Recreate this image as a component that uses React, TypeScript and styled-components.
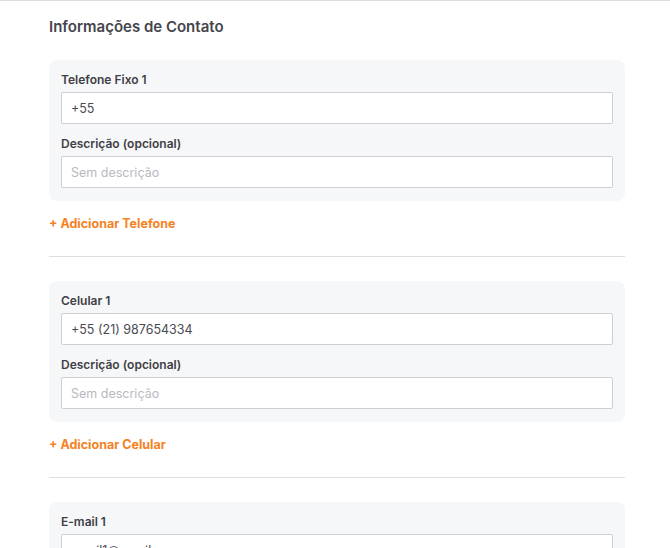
import React from 'react'
import styled, { createGlobalStyle } from 'styled-components'

const GlobalStyle = createGlobalStyle`
  body {
    margin: 0;
    background: #ffffff;
    font-family: Inter, "Noto Sans", "Liberation Sans", sans-serif;
  }
`

interface Field {
  readonly label: string
  readonly value?: string
  readonly placeholder?: string
}

interface Group {
  readonly fields: Field[]
  readonly addLabel: string
}

const groups: Group[] = [
  {
    fields: [
      { label: `Telefone Fixo 1`, value: `+55` },
      { label: `Descrição (opcional)`, placeholder: `Sem descrição` },
    ],
    addLabel: `+ Adicionar Telefone`,
  },
  {
    fields: [
      { label: `Celular 1`, value: `+55 (21) 987654334` },
      { label: `Descrição (opcional)`, placeholder: `Sem descrição` },
    ],
    addLabel: `+ Adicionar Celular`,
  },
  {
    fields: [
      { label: `E-mail 1`, value: `email1@gmail.com` },
      { label: `Descrição (opcional)`, placeholder: `Sem descrição` },
    ],
    addLabel: `+ Adicionar E-mail`,
  },
]

const App = () => {
  return (
    <>
      <GlobalStyle />
      <Page>
        <Section>
          <Title>Informações de Contato</Title>
          {groups.map((group, i) => (
            <GroupBlock key={i} first={i === 0}>
              <Card>
                {group.fields.map((field, j) => (
                  <FieldRow key={j}>
                    <Label>{field.label}</Label>
                    <Input
                      defaultValue={field.value}
                      placeholder={field.placeholder}
                    />
                  </FieldRow>
                ))}
              </Card>
              <AddLink>{group.addLabel}</AddLink>
            </GroupBlock>
          ))}
        </Section>
      </Page>
    </>
  )
}

export default App

const Page = styled.div`
  border-top: 1px solid #dcdce1;
  min-height: 547px;
`

const Section = styled.div`
  width: 576px;
  padding: 16px 0 0 49px;
  display: flex;
  flex-direction: column;
`

const Title = styled.h2`
  margin: 0 0 24px;
  font-size: 15px;
  line-height: 19px;
  font-weight: 600;
  color: #45454d;
`

const GroupBlock = styled.div<{ first: boolean }>`
  display: flex;
  flex-direction: column;
  ${({ first }) =>
    first
      ? ``
      : `
    border-top: 1px solid #dedee3;
    margin-top: 24px;
    padding-top: 24px;
  `}
`

const Card = styled.div`
  background: #f6f7f9;
  border-radius: 8px;
  padding: 12px 12px 13px;
  display: flex;
  flex-direction: column;
  gap: 12px;
`

const FieldRow = styled.div`
  display: flex;
  flex-direction: column;
  gap: 4px;
`

const Label = styled.label`
  font-size: 12px;
  line-height: 16px;
  font-weight: 600;
  color: #3f3f46;
`

const Input = styled.input`
  box-sizing: border-box;
  height: 32px;
  width: 100%;
  border: 1px solid #cfcfd5;
  border-radius: 2px;
  background: #ffffff;
  padding: 0 9px;
  font-family: inherit;
  font-size: 12.5px;
  color: #4a4a52;
  outline: none;

  &::placeholder {
    color: #b9b9c1;
  }
`

const AddLink = styled.button`
  align-self: flex-start;
  margin-top: 15px;
  padding: 0;
  border: none;
  background: none;
  font-family: inherit;
  font-size: 12.5px;
  line-height: 16px;
  font-weight: 700;
  color: #f5821f;
  cursor: pointer;
`
